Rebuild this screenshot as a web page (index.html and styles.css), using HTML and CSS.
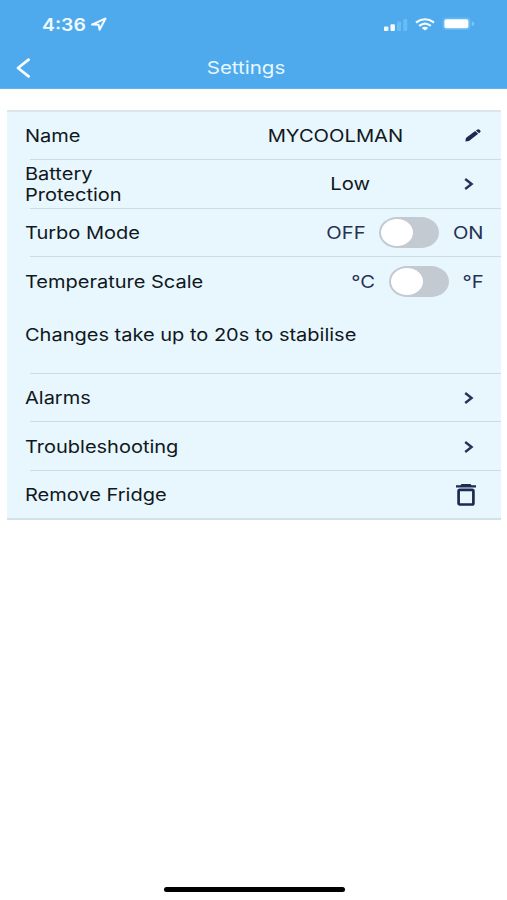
FILE: index.html
```html
<!DOCTYPE html>
<html lang="en">
<head>
<meta charset="utf-8">
<title>Settings</title>
<link rel="stylesheet" href="styles.css">
</head>
<body>
<header class="header">
  <div class="status">
    <span class="text time">4:36</span>
    <svg class="location" width="18" height="15" viewBox="0 0 18 15"><path d="M2 7.6 15.5 1.5 9.6 12.8 8.6 7.8Z" fill="none" stroke="#f2fbff" stroke-width="2" stroke-linejoin="round"/></svg>
    <svg class="signal" width="24" height="12" viewBox="0 0 24 12"><g fill="#f5fcff"><rect x="0" y="7.5" width="4.4" height="4.5" rx="1"/><rect x="6.5" y="5.2" width="4.4" height="6.8" rx="1"/></g><g fill="#69bdf6"><rect x="13" y="2.5" width="4" height="9.5" rx="1"/><rect x="19.3" y="0" width="4" height="12" rx="1"/></g></svg>
    <svg class="wifi" width="20" height="13" viewBox="0 0 20 13"><g fill="none" stroke="#f2fbff" stroke-width="2.2"><path d="M1 4.5Q10-2 19 4.5"/><path d="M4.2 7.8Q10 3.3 15.8 7.8"/></g><path d="M6.7 9.9Q10 7.5 13.3 9.9L10 12.6Z" fill="#f2fbff"/></svg>
    <svg class="battery" width="33" height="14" viewBox="0 0 33 14"><rect x=".5" y=".6" width="28" height="12.4" rx="3.5" fill="#63b8f4"/><path d="M29.8 4.5Q32.5 5 32.5 6.8T29.8 9.2Z" fill="#79c6f8"/><rect x="2.4" y="2.3" width="24" height="9" rx="2" fill="#fff"/></svg>
  </div>
  <nav class="nav">
    <svg class="back" width="16" height="20" viewBox="0 0 16 20"><path d="M13.6 1.6 3 10 13.6 18.4" fill="none" stroke="#f7fcff" stroke-width="2.7" stroke-linecap="round" stroke-linejoin="round"/></svg>
    <h1 class="text title">Settings</h1>
  </nav>
</header>
<main class="card">
  <section class="row">
    <span class="text label">Name</span>
    <span class="value name"><span class="text">MYCOOLMAN</span></span>
    <svg class="pencil" width="16" height="13" viewBox="0 0 16 13"><path d="M.4 12.4.9 9 10.1 2 13.2 4.8 4 11.9ZM10.9 1.4 12.6.4Q13.5 0 14.2.6L15.4 1.7Q16 2.4 15.3 3.1L14 4.2Z" fill="#1c2950"/></svg>
  </section>
  <section class="row">
    <span class="text label">Battery<br>Protection</span>
    <span class="value low"><span class="text">Low</span></span>
    <svg class="chevron" width="10" height="12" viewBox="0 0 10 12"><path d="M1.2 1 7.6 6 1.2 11" fill="none" stroke="#25345a" stroke-width="2.4"/></svg>
  </section>
  <section class="row">
    <span class="text label">Turbo Mode</span>
    <span class="value off"><span class="text">OFF</span></span>
    <span class="switch"></span>
    <span class="value on"><span class="text">ON</span></span>
  </section>
  <section class="row temperature">
    <span class="text label">Temperature Scale</span>
    <span class="value celsius"><span class="text">°C</span></span>
    <span class="switch"></span>
    <span class="value fahrenheit"><span class="text">°F</span></span>
  </section>
  <p class="note"><span class="text label">Changes take up to 20s to stabilise</span></p>
  <section class="row">
    <span class="text label">Alarms</span>
    <svg class="chevron" width="10" height="12" viewBox="0 0 10 12"><path d="M1.2 1 7.6 6 1.2 11" fill="none" stroke="#25345a" stroke-width="2.4"/></svg>
  </section>
  <section class="row">
    <span class="text label">Troubleshooting</span>
    <svg class="chevron" width="10" height="12" viewBox="0 0 10 12"><path d="M1.2 1 7.6 6 1.2 11" fill="none" stroke="#25345a" stroke-width="2.4"/></svg>
  </section>
  <section class="row last">
    <span class="text label">Remove Fridge</span>
    <svg class="trash" width="20" height="22" viewBox="0 0 20 22"><path d="M5.5 0h9l1 1.2H20v2.4H0V1.2h4.5Z" fill="#1c2b50"/><rect x="2.6" y="5.8" width="14.8" height="14.7" rx="1.2" fill="none" stroke="#1c2b50" stroke-width="2.7"/></svg>
  </section>
</main>
<footer class="home"></footer>
</body>
</html>
```
FILE: styles.css
```css
* { box-sizing: border-box; }
body {
  margin: 0;
  height: 900px;
  display: flex;
  flex-direction: column;
  background: #fff;
  color: #101820;
  font: 17.4px/21px Inter, "Liberation Sans", sans-serif;
}
svg { flex: none; display: block; }
.text {
  display: inline-block;
  white-space: nowrap;
  transform: scaleX(1.16);
}
.header { height: 89px; background: #4eaaed; border-bottom: 1px solid #63b4ef; }
.status { height: 48px; display: flex; align-items: center; padding: 0 32px 0 42px; }
.time { width: 48px; padding-top: 2px; transform-origin: left; transform: scaleX(1.14); color: #f2fbff; font-weight: 600; font-size: 17px; }
.location { margin-top: 1px; }
.signal { margin: 2px 7px 0 auto; width: 24px; }
.wifi { margin-right: 7px; }
.nav { height: 40px; display: grid; grid-template-columns: 46px 1fr 61px; align-items: center; }
.back { margin-left: 15px; }
.title { margin: -1px 0 0; text-align: center; color: #e7f7ff; font-size: 17.4px; font-weight: 400; transform: scaleX(1.18); }
.card {
  margin: 21px 6px 0 7px;
  background: #e8f6fe;
  border-top: 2px solid #dbe6ea;
  border-bottom: 2px solid #d3e2e8;
}
.row {
  height: 48.7px;
  display: flex;
  align-items: center;
  padding: 0 18px 1px;
  background: linear-gradient(#cddbe3, #cddbe3) 23px 100% / 100% 1px no-repeat;
}
.row:first-child { height: 48px; padding-bottom: 2px; }
.label { transform-origin: left; transform: scaleX(1.15); margin-right: auto; }
.value { display: flex; justify-content: center; color: #263252; }
.name { width: 136px; margin-right: 62px; color: #101820; }
.low { width: 40px; margin-right: 94px; color: #101820; }
.pencil { margin-right: 2px; }
.chevron { margin-right: 9px; margin-top: 1px; }
.off { width: 40px; margin-right: 13px; }
.on { width: 30px; margin-left: 14px; }
.celsius { width: 24px; margin-right: 14px; }
.fahrenheit { width: 20px; margin-left: 14px; }
.switch {
  flex: none;
  width: 60px;
  height: 31px;
  padding: 2px;
  border-radius: 18px / 15.5px;
  background: #c4cad1;
}
.switch::before {
  content: "";
  display: block;
  width: 32px;
  height: 27px;
  border-radius: 50%;
  background: #fff;
}
.temperature { background: none; }
.note {
  margin: 0;
  height: 67.6px;
  padding-top: 18px;
  background: linear-gradient(#cddbe3, #cddbe3) 23px 100% / 100% 1px no-repeat;
}
.note .label { margin-left: 18px; }
.last { height: 47px; background: none; }
.trash { margin-right: 7px; margin-top: 1px; }
.home { width: 181px; height: 5px; margin: auto auto 8px 164px; border-radius: 3px; background: #000; }
```
